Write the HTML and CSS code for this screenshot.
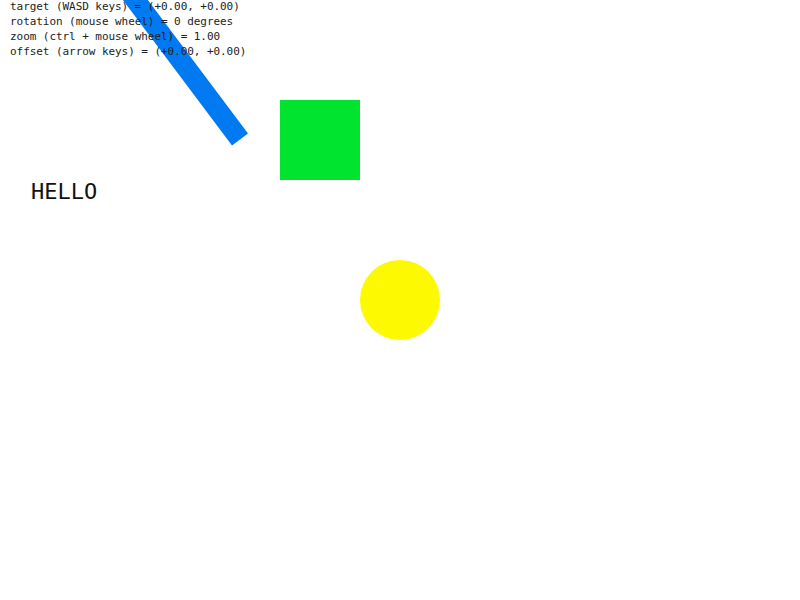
FILE: index.html
```html
<!DOCTYPE html>
<html>
<head>
<meta charset="utf-8">
<link rel="stylesheet" href="styles.css">
</head>
<body>
<div class="stage">
  <svg class="scene" width="800" height="600" viewBox="0 0 800 600">
    <line x1="240" y1="139.5" x2="60" y2="-100.5" stroke="#0079f1" stroke-width="20"/>
    <rect x="280" y="100" width="80" height="80" fill="#00e430"/>
    <circle cx="400" cy="300" r="40" fill="#fdf900"/>
  </svg>
  <div class="hello">HELLO</div>
  <div class="hud">
    <div class="hud-line">target (WASD keys) = (+0.00, +0.00)</div>
    <div class="hud-line">rotation (mouse wheel) = 0 degrees</div>
    <div class="hud-line">zoom (ctrl + mouse wheel) = 1.00</div>
    <div class="hud-line">offset (arrow keys) = (+0.00, +0.00)</div>
  </div>
</div>
</body>
</html>
```
FILE: styles.css
```css
html, body {
  margin: 0;
  padding: 0;
  background: #ffffff;
}
.stage {
  position: relative;
  width: 800px;
  height: 600px;
  overflow: hidden;
}
.scene {
  position: absolute;
  left: 0;
  top: 0;
}
.hud {
  position: absolute;
  left: 10px;
  top: -1px;
  font-family: "DejaVu Sans Mono", monospace;
  font-size: 11px;
  letter-spacing: -0.06px;
  line-height: 15px;
  color: #222;
}
.hello {
  position: absolute;
  left: 31px;
  top: 178px;
  font-family: "DejaVu Sans Mono", monospace;
  font-size: 22px;
  line-height: 28px;
  color: #111;
}
```
